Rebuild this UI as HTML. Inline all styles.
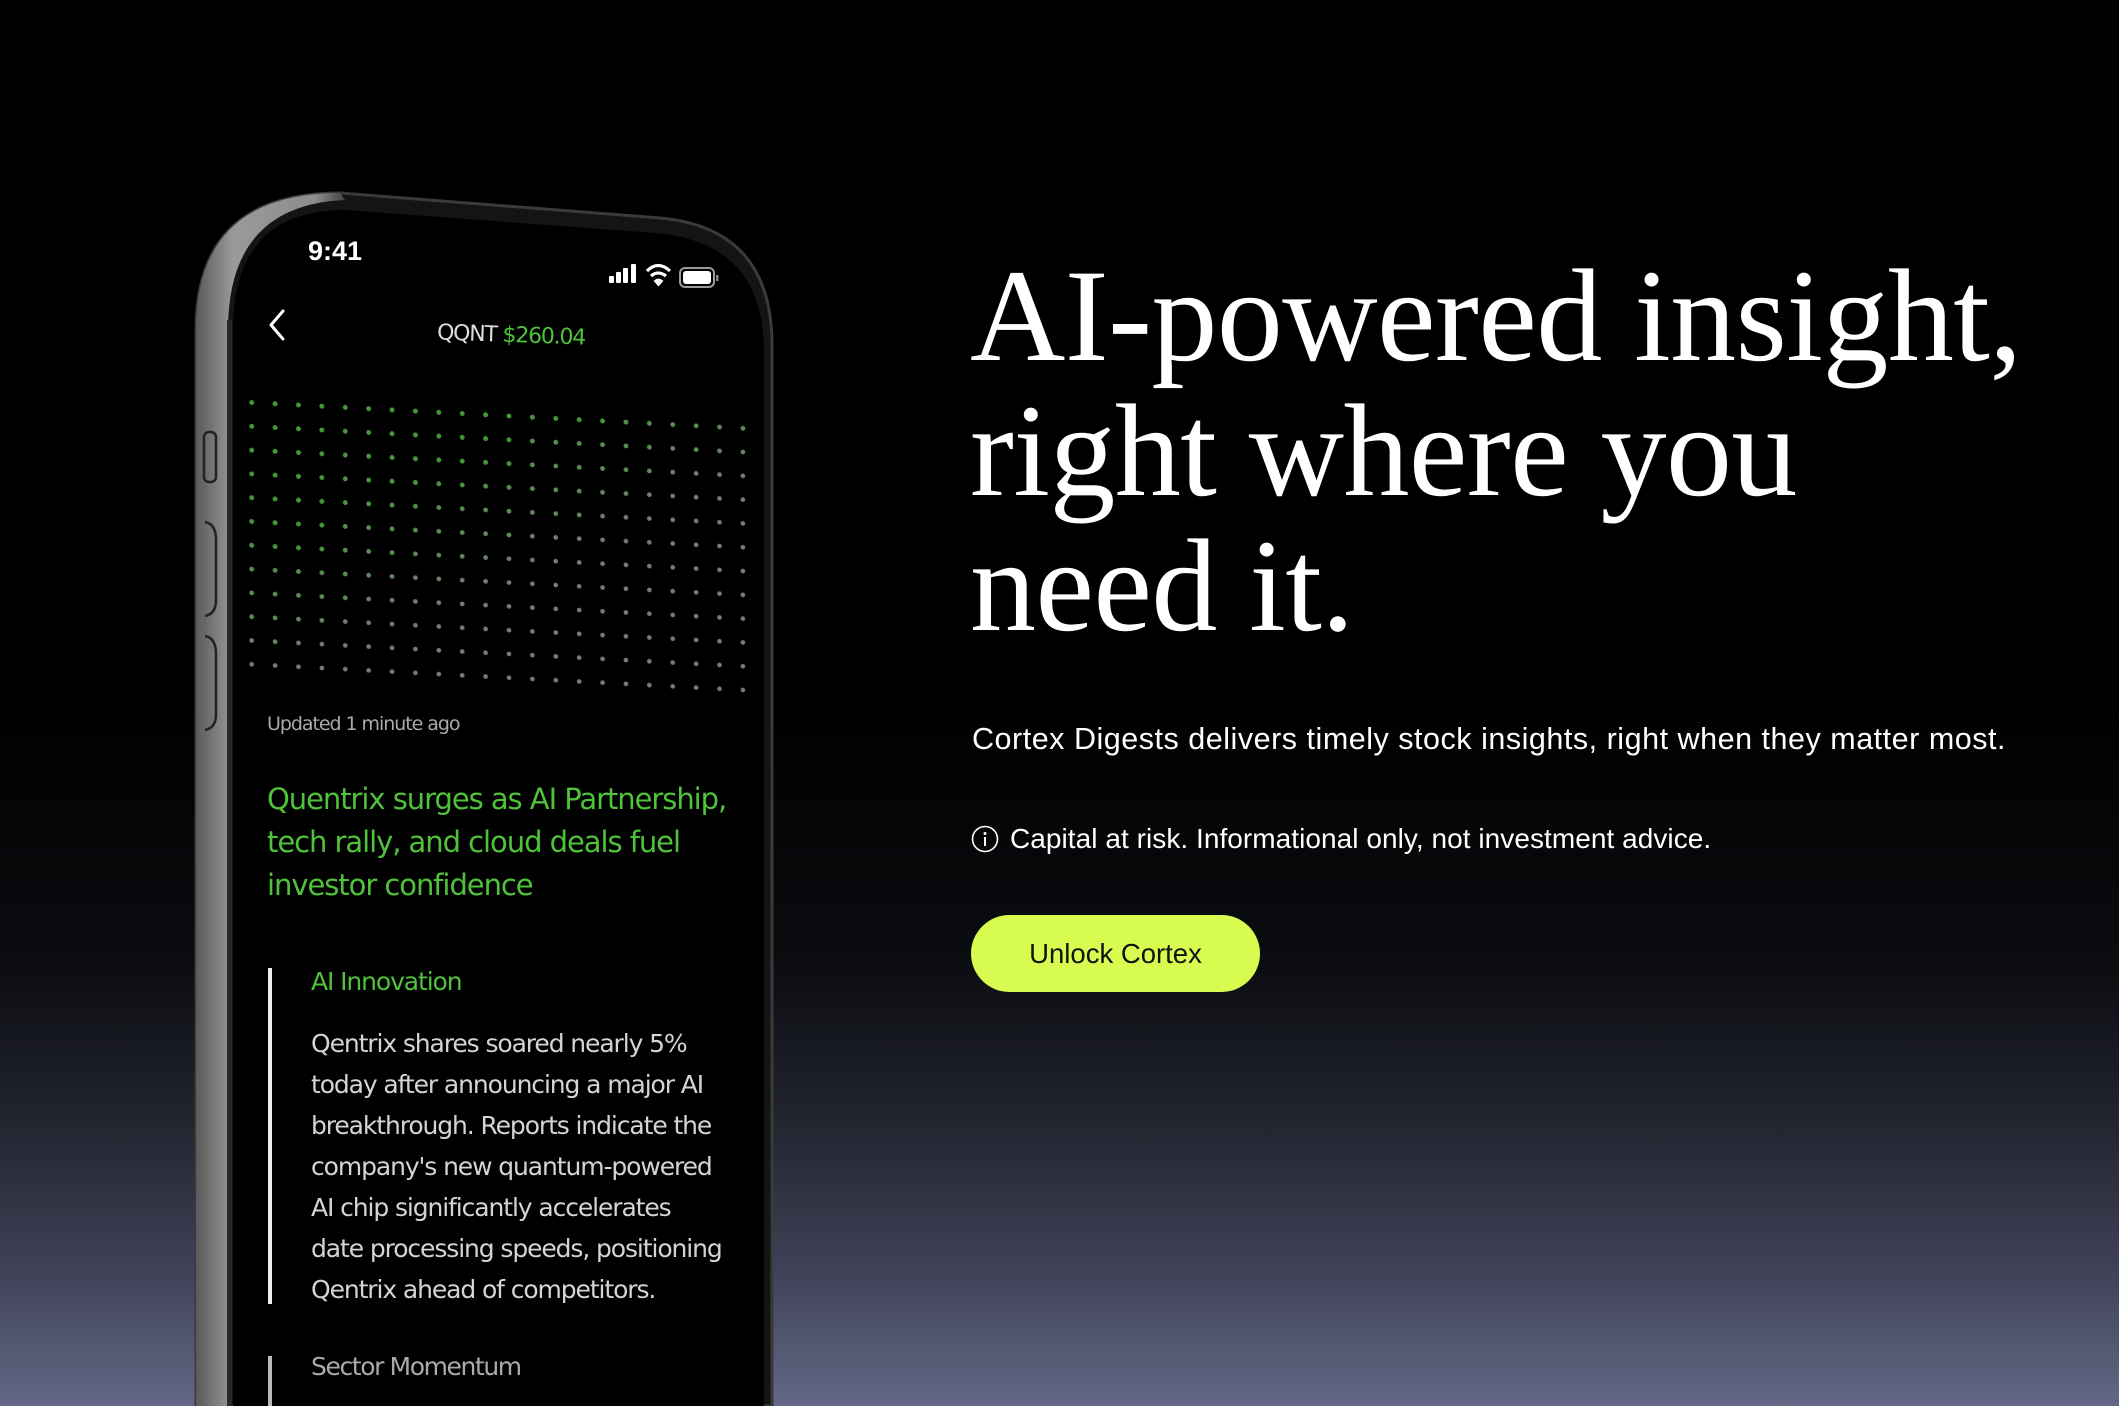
<!DOCTYPE html>
<html><head><meta charset="utf-8">
<style>
html,body{margin:0;padding:0}
body{width:2119px;height:1406px;overflow:hidden;position:relative;
background:linear-gradient(180deg,#000 0px,#000 700px,#0b0c10 960px,#22242f 1120px,#41445a 1280px,#646886 1406px);
font-family:"Liberation Sans",sans-serif;color:#fff}
.a{position:absolute;white-space:nowrap}
h1{position:absolute;left:970px;top:248px;margin:0;font-family:"Liberation Serif",serif;font-weight:400;font-size:132px;line-height:135px;letter-spacing:-0.6px;color:#fff}
.sub{left:972px;top:722px;font-size:30.5px;letter-spacing:0.52px}
.disc{left:1010px;top:823px;font-size:28px;letter-spacing:0.05px}
.btn{position:absolute;left:971px;top:915px;width:289px;height:77px;border-radius:39px;background:#d8fb50;color:#111;font-size:27.5px;text-align:center;line-height:77px}
.scr{font-family:"DejaVu Sans","Liberation Sans",sans-serif}
.g{color:#4fc23a}
.dots{position:absolute;left:240px;top:390px;width:510px;height:284px;transform:skewY(3deg);transform-origin:0 0}
.dl{position:absolute;inset:0;background-size:23.4px 23.8px}
.gray{background-image:radial-gradient(circle,#7a7a7a 0 2px,transparent 2.6px)}
.grn{background-image:radial-gradient(circle,#3f9a32 0 2px,transparent 2.6px);
-webkit-mask-image:linear-gradient(155deg,#000 0%,#000 30%,transparent 60%);mask-image:linear-gradient(155deg,#000 0%,#000 30%,transparent 60%)}
.p{left:311px;font-size:25px;color:#d4d4d4;letter-spacing:-1.1px}
</style></head><body>

<svg class="a" style="left:0;top:0" width="800" height="1406" viewBox="0 0 800 1406">
<defs>
<linearGradient id="mg" x1="0" x2="1">
<stop offset="0" stop-color="#5a5a5a"/><stop offset="0.25" stop-color="#9a9a9a"/><stop offset="0.8" stop-color="#8c8c8c"/><stop offset="1" stop-color="#444"/>
</linearGradient>
</defs>
<path d="M196,1406 L196,330 Q196,193 340,193 L660,218 Q772,228 772,345 L772,1406 Z" fill="#141414" stroke="#3a3a3a" stroke-width="3"/>
<path d="M196,1406 L196,330 Q196,193 340,193 L345,200 Q228,205 228,330 L228,1406 Z" fill="url(#mg)"/>
<path d="M233,1406 L233,330 Q233,210 345,210 L655,233 Q764,242 764,352 L764,1406 Z" fill="#000"/>
<rect x="227" y="320" width="5" height="1086" fill="#2a2a2a"/>
<rect x="204" y="432" width="12" height="50" rx="5" fill="none" stroke="#222" stroke-width="2.5"/>
<path d="M205,522 Q216,524 216,540 L216,600 Q216,614 205,616" fill="none" stroke="#222" stroke-width="2.5"/>
<path d="M205,636 Q216,638 216,654 L216,714 Q216,728 205,730" fill="none" stroke="#222" stroke-width="2.5"/>
<rect x="609" y="276" width="5" height="7" rx="1" fill="#fff"/>
<rect x="616" y="272" width="5" height="11" rx="1" fill="#fff"/>
<rect x="623" y="268" width="5" height="15" rx="1" fill="#fff"/>
<rect x="631" y="264" width="5" height="19" rx="1" fill="#fff"/>
<path d="M647,271 Q658,260 670,271" fill="none" stroke="#fff" stroke-width="3.2"/>
<path d="M651,276 Q658,270 666,276" fill="none" stroke="#fff" stroke-width="3.2"/>
<path d="M655,281 L658.5,285 L662,281 Q658.5,278 655,281Z" fill="#fff" stroke="#fff" stroke-width="2"/>
<rect x="680" y="268" width="34" height="19" rx="5" fill="none" stroke="#999" stroke-width="2"/>
<rect x="683" y="271" width="28" height="13" rx="3" fill="#fff"/>
<rect x="716" y="275" width="2.5" height="6" fill="#888"/>
<path d="M283,311 L271,325 L283,339" fill="none" stroke="#fff" stroke-width="3" stroke-linecap="round" stroke-linejoin="round"/>
<rect x="268" y="968" width="4" height="336" fill="#eee"/>
<rect x="268" y="1356" width="4" height="50" fill="#bbb"/>
</svg>

<div class="a scr" style="left:308px;top:236px;font-size:27px;font-weight:bold;font-family:'Liberation Sans',sans-serif">9:41</div>
<div class="a scr" style="left:437px;top:323px;font-size:22px;color:#ddd;letter-spacing:-1.2px;transform:rotate(2deg)">QQNT <span class="g">$260.04</span></div>
<div class="dots"><div class="dl gray"></div><div class="dl grn"></div></div>
<div class="a scr" style="left:267px;top:713px;font-size:19px;color:#aaa;letter-spacing:-1.05px">Updated 1 minute ago</div>
<div class="a scr g" style="left:267px;top:778px;font-size:29px;line-height:43px;letter-spacing:-1.05px">Quentrix surges as AI Partnership,<br>tech rally, and cloud deals fuel<br>investor confidence</div>
<div class="a scr g" style="left:311px;top:967px;font-size:25px;letter-spacing:-1.1px">AI Innovation</div>
<div class="a scr p" style="top:1023px;line-height:41px">Qentrix shares soared nearly 5%<br>today after announcing a major AI<br>breakthrough. Reports indicate the<br>company's new quantum-powered<br>AI chip significantly accelerates<br>date processing speeds, positioning<br>Qentrix ahead of competitors.</div>
<div class="a scr" style="left:311px;top:1352px;font-size:25px;color:#aaa;letter-spacing:-1.4px">Sector Momentum</div>

<h1>AI-powered insight,<br>right where you<br>need it.</h1>
<div class="a sub">Cortex Digests delivers timely stock insights, right when they matter most.</div>
<svg class="a" style="left:971px;top:825px" width="28" height="28" viewBox="0 0 28 28"><circle cx="14" cy="14" r="12.5" fill="none" stroke="#fff" stroke-width="1.6"/><circle cx="14" cy="8.5" r="1.5" fill="#fff"/><rect x="13" y="12" width="2" height="9" fill="#fff"/></svg>
<div class="a disc">Capital at risk. Informational only, not investment advice.</div>
<div class="btn">Unlock Cortex</div>
</body></html>
